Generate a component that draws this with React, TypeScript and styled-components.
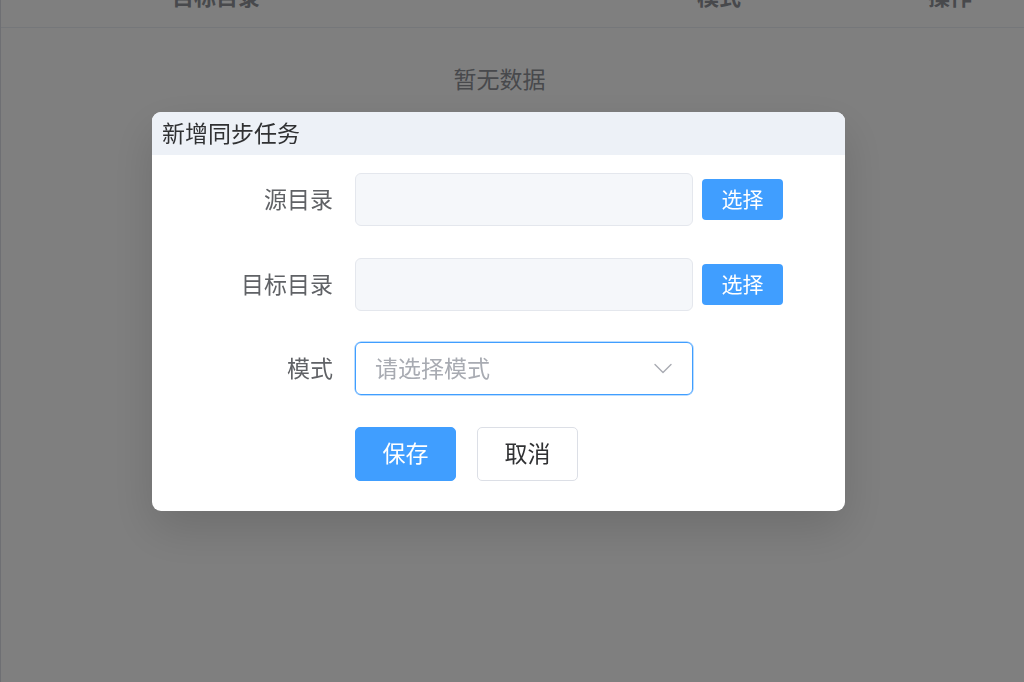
import React from "react";
import styled, { createGlobalStyle } from "styled-components";

const Global = createGlobalStyle`
  html, body { margin: 0; padding: 0; background: #ffffff; overflow: hidden; }
  body { font-family: "Noto Sans CJK SC", "Noto Sans", "Liberation Sans", sans-serif; }
  * { box-sizing: border-box; }
`;

const Page = styled.div`
  width: 1024px;
  height: 682px;
  border-left: 1px solid #dcdfe6;
  overflow: hidden;
`;

const Table = styled.div`
  margin-top: -37px;
  display: flex;
  flex-direction: column;
`;

const HeaderRow = styled.div`
  display: grid;
  grid-template-columns: 525px 231px 1fr;
  padding-left: 171px;
  height: 65px;
  align-items: center;
  border-bottom: 1px solid #ebeef5;
`;

const HeaderCell = styled.div`
  font-size: 22px;
  font-weight: 700;
  color: #909399;
`;

const Empty = styled.div`
  width: 997px;
  height: 104px;
  padding-bottom: 4px;
  display: flex;
  align-items: center;
  justify-content: center;
  font-size: 23px;
  color: #909399;
`;

const Overlay = styled.div`
  position: fixed;
  inset: 0;
  background: rgba(0, 0, 0, 0.5);
  padding: 112px 0 0 152px;
  display: flex;
  align-items: flex-start;
`;

const Dialog = styled.div`
  width: 693px;
  background: #ffffff;
  border-radius: 9px;
  overflow: hidden;
  box-shadow: 0 18px 46px rgba(0, 0, 0, 0.14);
`;

const DialogHeader = styled.div`
  height: 43px;
  background: #edf1f7;
  display: flex;
  align-items: center;
  padding: 0 0 3px 10px;
  font-size: 23px;
  color: #303133;
`;

const DialogBody = styled.div`
  padding: 18px 0 30px;
  display: flex;
  flex-direction: column;
  gap: 31.5px;
`;

const FormRow = styled.div`
  display: flex;
  align-items: center;
  height: 53px;
`;

const Label = styled.label`
  width: 181px;
  margin-right: 22px;
  padding-bottom: 3px;
  text-align: right;
  font-size: 23px;
  color: #606266;
`;

const PathInput = styled.div`
  width: 338px;
  height: 53px;
  background: #f5f7fa;
  border: 1px solid #e4e7ed;
  border-radius: 6px;
`;

const PickButton = styled.button`
  margin-left: 9px;
  width: 81px;
  height: 41px;
  border: none;
  border-radius: 4px;
  background: #409eff;
  color: #ffffff;
  font-family: inherit;
  font-size: 21px;
  padding: 0 0 3px;
  display: flex;
  align-items: center;
  justify-content: center;
`;

const Select = styled.div`
  width: 338px;
  height: 53px;
  border: 1px solid #409eff;
  box-shadow: 0 0 0 0.5px #79bbff;
  border-radius: 6px;
  display: flex;
  align-items: center;
  justify-content: space-between;
  padding: 0 20px 0 19px;
`;

const Placeholder = styled.span`
  font-size: 23px;
  color: #a8abb2;
  padding-bottom: 3px;
`;

const Actions = styled.div`
  display: flex;
  gap: 21px;
  padding-left: 203px;
`;

const ActionButton = styled.button<{ $primary?: boolean }>`
  width: 101px;
  height: 54px;
  border-radius: 5px;
  border: 1px solid ${(p) => (p.$primary ? "#409eff" : "#dcdfe6")};
  background: ${(p) => (p.$primary ? "#409eff" : "#ffffff")};
  color: ${(p) => (p.$primary ? "#ffffff" : "#303133")};
  font-family: inherit;
  font-size: 23px;
  padding: 0 0 3px;
  display: flex;
  align-items: center;
  justify-content: center;
`;

const Chevron = () => (
  <svg width="18" height="11" viewBox="0 0 18 11" fill="none">
    <polyline points="1,1.5 9,9.5 17,1.5" stroke="#a8abb2" strokeWidth="1.4" strokeLinecap="round" strokeLinejoin="round" />
  </svg>
);

export default function App() {
  return (
    <>
      <Global />
      <Page>
        <Table>
          <HeaderRow>
            <HeaderCell>目标目录</HeaderCell>
            <HeaderCell>模式</HeaderCell>
            <HeaderCell>操作</HeaderCell>
          </HeaderRow>
          <Empty>暂无数据</Empty>
        </Table>
      </Page>
      <Overlay>
        <Dialog>
          <DialogHeader>新增同步任务</DialogHeader>
          <DialogBody>
            <FormRow>
              <Label>源目录</Label>
              <PathInput />
              <PickButton>选择</PickButton>
            </FormRow>
            <FormRow>
              <Label>目标目录</Label>
              <PathInput />
              <PickButton>选择</PickButton>
            </FormRow>
            <FormRow>
              <Label>模式</Label>
              <Select>
                <Placeholder>请选择模式</Placeholder>
                <Chevron />
              </Select>
            </FormRow>
            <Actions>
              <ActionButton $primary>保存</ActionButton>
              <ActionButton>取消</ActionButton>
            </Actions>
          </DialogBody>
        </Dialog>
      </Overlay>
    </>
  );
}
